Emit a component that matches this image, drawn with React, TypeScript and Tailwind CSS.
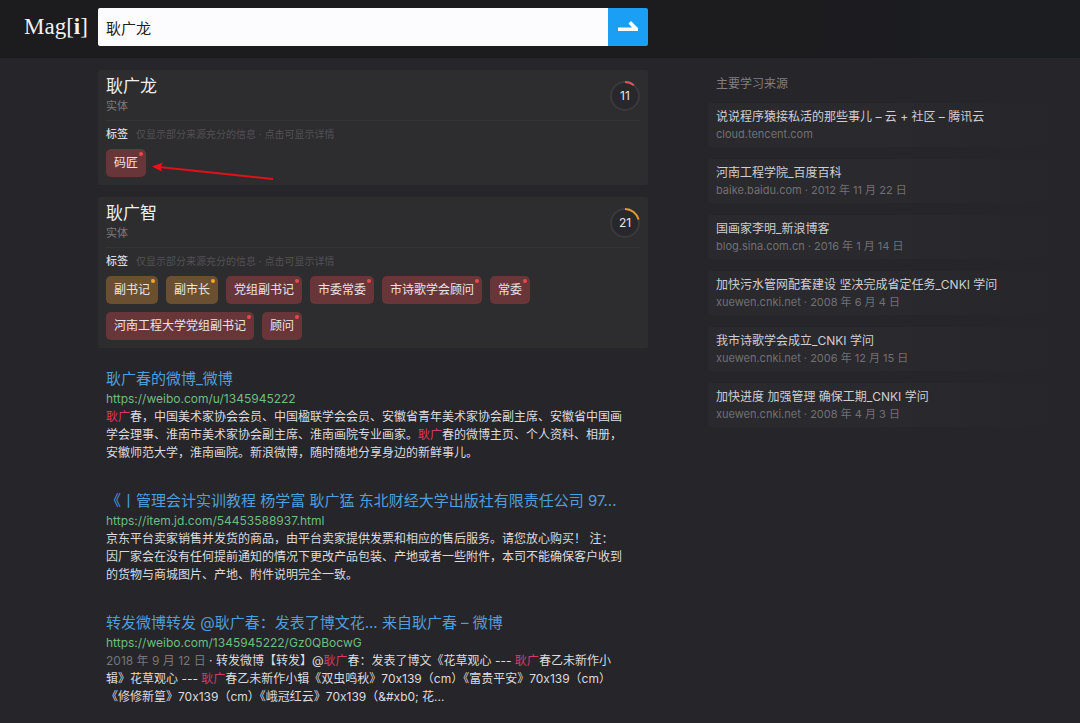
import React from 'react';

type Tag = { label: string; level: 'low' | 'mid' };

const tagStyles = {
  low: { box: 'bg-[#683539]', dot: 'bg-[#e8494f]' },
  mid: { box: 'bg-[#6a5030]', dot: 'bg-[#f5a623]' },
};

const entities: { name: string; score: number; color: string; tags: Tag[] }[] = [
  {
    name: '耿广龙',
    score: 11,
    color: '#e0555a',
    tags: [{ label: '码匠', level: 'low' }],
  },
  {
    name: '耿广智',
    score: 21,
    color: '#e59a25',
    tags: [
      { label: '副书记', level: 'mid' },
      { label: '副市长', level: 'mid' },
      { label: '党组副书记', level: 'low' },
      { label: '市委常委', level: 'low' },
      { label: '市诗歌学会顾问', level: 'low' },
      { label: '常委', level: 'low' },
      { label: '河南工程大学党组副书记', level: 'low' },
      { label: '顾问', level: 'low' },
    ],
  },
];

const sources = [
  { title: '说说程序猿接私活的那些事儿 – 云 + 社区 – 腾讯云', meta: 'cloud.tencent.com' },
  { title: '河南工程学院_百度百科', meta: 'baike.baidu.com · 2012 年 11 月 22 日' },
  { title: '国画家李明_新浪博客', meta: 'blog.sina.com.cn · 2016 年 1 月 14 日' },
  { title: '加快污水管网配套建设 坚决完成省定任务_CNKI 学问', meta: 'xuewen.cnki.net · 2008 年 6 月 4 日' },
  { title: '我市诗歌学会成立_CNKI 学问', meta: 'xuewen.cnki.net · 2006 年 12 月 15 日' },
  { title: '加快进度 加强管理 确保工期_CNKI 学问', meta: 'xuewen.cnki.net · 2008 年 4 月 3 日' },
];

const Hit: React.FC = () => <em className="not-italic text-[#d83a68]">耿广</em>;

const Score: React.FC<{ value: number; color: string }> = ({ value, color }) => (
  <div className="grid size-[30px] place-items-center">
    <svg viewBox="0 0 30 30" className="col-start-1 row-start-1 size-[30px] -rotate-90">
      <circle cx="15" cy="15" r="14" fill="#28272b" stroke="#3a393d" strokeWidth="2" />
      <circle
        cx="15"
        cy="15"
        r="14"
        fill="none"
        stroke={color}
        strokeWidth="2"
        pathLength="100"
        strokeDasharray={`${value} 100`}
      />
    </svg>
    <span className="relative col-start-1 row-start-1 text-xs text-[#e6e6e8]">{value}</span>
  </div>
);

const Result: React.FC<{ title: string; url: string; children: React.ReactNode }> = ({
  title,
  url,
  children,
}) => (
  <article className="px-2">
    <h3 className="truncate text-[15px] leading-[22px] text-[#4f9fdc]">
      <a href={url}>{title}</a>
    </h3>
    <a href={url} className="block text-xs leading-[18px] text-[#70bd83]">
      {url}
    </a>
    <p className="text-xs leading-[18px] text-[#dcdbdf]">{children}</p>
  </article>
);

const App: React.FC = () => {
  return (
    <div className="min-h-screen bg-[#262529] font-['Inter','Noto_Sans_CJK_SC',sans-serif]" lang="zh-CN">
      <header className="bg-linear-to-r from-[#1c1b1e] from-60% to-[#1b1d20] pt-2 pb-3">
        <form className="flex max-w-[648px] items-center">
          <a
            href="#"
            className="w-[98px] shrink-0 pl-6 font-['Liberation_Serif',serif] text-[23px] leading-8 text-[#f2f2f2]"
          >
            Mag[<b>i</b>]
          </a>
          <input
            type="text"
            aria-label="搜索"
            defaultValue="耿广龙"
            className="h-[38px] min-w-0 flex-1 rounded-l-xs bg-[#fcfbfe] px-2 text-[15px] text-[#222225] outline-none"
          />
          <button
            type="submit"
            aria-label="搜索"
            className="grid h-[38px] w-10 place-items-center rounded-r-xs bg-[#1a9ff5]"
          >
            <svg viewBox="0 0 20 12" className="h-3 w-5" fill="#fff">
              <path d="M0 6.500H14L10.500 2.500L13 0L20 7V10H0Z" />
            </svg>
          </button>
        </form>
      </header>

      <div className="flex gap-[60px] pt-3 pr-6 pb-4 pl-[98px]">
        <main className="w-[550px] max-w-full">
          <div className="space-y-3">
            {entities.map((entity, index) => (
              <section key={entity.name} className="relative rounded-xs bg-[#2d2c2f] px-2 pt-[6px] pb-2">
                <div className="flex items-center justify-between border-b border-[#343337] pb-1">
                  <div>
                    <h2 className="text-[17px] leading-5 text-[#efeff1]">{entity.name}</h2>
                    <p className="text-[11px] leading-5 text-[#7b7a7e]">实体</p>
                  </div>
                  <Score value={entity.score} color={entity.color} />
                </div>
                <div className="flex items-center gap-2 pt-1 leading-[18px]">
                  <h4 className="text-[11px] font-medium text-[#dcdbde]">标签</h4>
                  <span className="text-[10px] text-[#525155]">
                    仅显示部分来源充分的信息 · 点击可显示详情
                  </span>
                </div>
                <div className="flex flex-wrap gap-2 pt-[6px]">
                  {entity.tags.map((tag) => (
                    <button
                      key={tag.label}
                      type="button"
                      className={`relative h-7 rounded-[5px] px-2 text-xs text-[#ece4e4] ${tagStyles[tag.level].box}`}
                    >
                      {tag.label}
                      <span
                        className={`absolute top-[3px] right-[3px] size-1 rounded-full ${tagStyles[tag.level].dot}`}
                      />
                    </button>
                  ))}
                </div>
                {/* Pointer to the first tag */}
                {index === 0 && (
                  <svg
                    viewBox="0 0 124 20"
                    className="absolute top-[92px] left-[53px] h-5 w-[124px]"
                    aria-hidden="true"
                  >
                    <path d="M8 5L122 17" stroke="#df1218" strokeWidth="2" />
                    <path d="M1 4.500L12 0.500L9.500 5L11 9.500Z" fill="#e8141a" />
                  </svg>
                )}
              </section>
            ))}
          </div>

          <div className="space-y-7 pt-5">
            <Result title="耿广春的微博_微博" url="https://weibo.com/u/1345945222">
              <Hit />
              春，中国美术家协会会员、中国楹联学会会员、安徽省青年美术家协会副主席、安徽省中国画
              <br />
              学会理事、淮南市美术家协会副主席、淮南画院专业画家。
              <Hit />
              春的微博主页、个人资料、相册，
              <br />
              安徽师范大学，淮南画院。新浪微博，随时随地分享身边的新鲜事儿。
            </Result>
            <Result
              title="《丨管理会计实训教程 杨学富 耿广猛 东北财经大学出版社有限责任公司 97..."
              url="https://item.jd.com/54453588937.html"
            >
              京东平台卖家销售并发货的商品，由平台卖家提供发票和相应的售后服务。请您放心购买！ 注：
              <br />
              因厂家会在没有任何提前通知的情况下更改产品包装、产地或者一些附件，本司不能确保客户收到
              <br />
              的货物与商城图片、产地、附件说明完全一致。
            </Result>
            <Result
              title="转发微博转发 @耿广春：发表了博文花... 来自耿广春 – 微博"
              url="https://weibo.com/1345945222/Gz0QBocwG"
            >
              <span className="text-[#77767a]">2018 年 9 月 12 日</span> · 转发微博【转发】@
              <Hit />
              春：发表了博文《花草观心 --- <Hit />
              春乙未新作小
              <br />
              辑》花草观心 --- <Hit />
              春乙未新作小辑《双虫鸣秋》70x139（cm）《富贵平安》70x139（cm）
              <br />
              《修修新篁》70x139（cm）《峨冠红云》70x139（&amp;#xb0; 花...
            </Result>
          </div>
        </main>

        <aside className="min-w-0 flex-1 pt-1">
          <h4 className="px-2 text-xs leading-5 text-[#7f7e82]">主要学习来源</h4>
          <ul className="mt-[9px] space-y-3">
            {sources.map((source) => (
              <li key={source.title}>
                <a
                  href="#"
                  className="block rounded-xs bg-linear-to-r from-[#2a292d] from-50% to-[#262529] px-2 py-[5px]"
                >
                  <span className="block truncate text-xs leading-[18px] text-[#cfced2]">{source.title}</span>
                  <span className="block truncate text-[11px] leading-4 text-[#717074]">{source.meta}</span>
                </a>
              </li>
            ))}
          </ul>
        </aside>
      </div>
    </div>
  );
};

export default App;
